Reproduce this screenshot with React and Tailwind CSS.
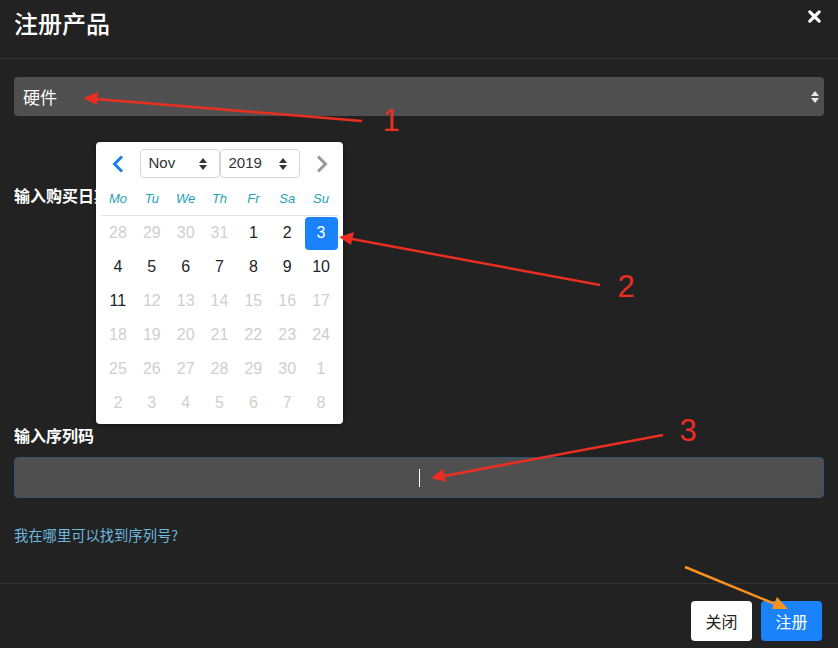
import React from "react";

const cjk = { fontFamily: '"Noto Sans CJK SC", "Noto Sans", sans-serif' };
const latin = { fontFamily: '"Liberation Sans", Arial, sans-serif' };

const weekDays = ["Mo", "Tu", "We", "Th", "Fr", "Sa", "Su"];

// [label, kind] kind: "off" = greyed, "on" = current month, "sel" = selected
const days = [
  ["28", "off"], ["29", "off"], ["30", "off"], ["31", "off"], ["1", "on"], ["2", "on"], ["3", "sel"],
  ["4", "on"], ["5", "on"], ["6", "on"], ["7", "on"], ["8", "on"], ["9", "on"], ["10", "on"],
  ["11", "on"], ["12", "off"], ["13", "off"], ["14", "off"], ["15", "off"], ["16", "off"], ["17", "off"],
  ["18", "off"], ["19", "off"], ["20", "off"], ["21", "off"], ["22", "off"], ["23", "off"], ["24", "off"],
  ["25", "off"], ["26", "off"], ["27", "off"], ["28", "off"], ["29", "off"], ["30", "off"], ["1", "off"],
  ["2", "off"], ["3", "off"], ["4", "off"], ["5", "off"], ["6", "off"], ["7", "off"], ["8", "off"],
];

const SortIcon = ({ color = "#333" }) => (
  <svg width="8" height="12" viewBox="0 0 8 12">
    <path d="M4 0 L8 5 L0 5 Z" fill={color} />
    <path d="M0 7 L8 7 L4 12 Z" fill={color} />
  </svg>
);

const MiniSelect = ({ value }) => (
  <div className="w-[80px] h-[29px] border border-[#d6d6d6] rounded-[4px] flex items-center justify-between pl-[8px] pr-[12px] text-[15px] text-[#333]">
    <span>{value}</span>
    <SortIcon />
  </div>
);

const Calendar = () => (
  <div
    className="absolute left-[96px] top-[142px] w-[247px] h-[282px] bg-white rounded-[4px] px-[5px] pt-[7px] shadow-[0_1px_4px_rgba(0,0,0,0.4)]"
    style={latin}
  >
    <div className="flex items-center justify-between h-[29px]">
      <div className="w-[33px] flex justify-center">
        <svg width="12" height="18" viewBox="0 0 12 18">
          <path d="M10 1.5 L2.5 9 L10 16.5" stroke="#1a7ff0" strokeWidth="3" fill="none" />
        </svg>
      </div>
      <div className="flex">
        <MiniSelect value="Nov" />
        <MiniSelect value="2019" />
      </div>
      <div className="w-[33px] flex justify-center">
        <svg width="12" height="18" viewBox="0 0 12 18">
          <path d="M2 1.5 L9.5 9 L2 16.5" stroke="#999" strokeWidth="3" fill="none" />
        </svg>
      </div>
    </div>
    <div className="grid grid-cols-7 h-[36px] items-center border-b border-[#e2e2e2] mt-[2px] pt-[3px]">
      {weekDays.map((d) => (
        <div key={d} className="text-center italic text-[13px] text-[#1fa0b7]">
          {d}
        </div>
      ))}
    </div>
    <div className="grid grid-cols-7">
      {days.map(([n, kind], i) => (
        <div key={i} className="h-[34px] flex items-center justify-center">
          <div
            className={
              kind === "sel"
                ? "w-[33px] h-[33px] rounded-[4px] bg-[#1a82fb] text-white flex items-center justify-center text-[16px]"
                : kind === "on"
                ? "text-[16px] text-[#212529]"
                : "text-[16px] text-[#cfcfcf]"
            }
          >
            {n}
          </div>
        </div>
      ))}
    </div>
  </div>
);

const Annotations = () => (
  <svg
    className="absolute left-0 top-0 pointer-events-none"
    width="838"
    height="648"
    viewBox="0 0 838 648"
  >
    <g stroke="#ea2e22" strokeWidth="2.5" fill="#ea2e22">
      <line x1="362" y1="121" x2="96" y2="99" />
      <path d="M83 98 L98 92 L97 105 Z" stroke="none" />
      <line x1="600" y1="285" x2="352" y2="239" />
      <path d="M339 237 L354 232 L351 245 Z" stroke="none" />
      <line x1="663" y1="435" x2="444" y2="476" />
      <path d="M431 478 L443 469 L446 482 Z" stroke="none" />
    </g>
    <g stroke="#f7931e" strokeWidth="2.5" fill="#f7931e">
      <line x1="685" y1="567" x2="775" y2="604" />
      <path d="M788 609 L772 609 L777 597 Z" stroke="none" />
    </g>
    <g fill="#ea2e22" style={latin} fontSize="31">
      <text x="391" y="131" textAnchor="middle">1</text>
      <text x="626" y="297" textAnchor="middle">2</text>
      <text x="688" y="441" textAnchor="middle">3</text>
    </g>
  </svg>
);

export default function App() {
  return (
    <div className="relative w-[838px] h-[648px] bg-[#222222] overflow-hidden" style={cjk}>
      <div className="h-[59px] border-b border-[#333333] px-[14px] pt-[7px] flex items-start justify-between">
        <h1 className="text-[24px] leading-[32px] font-medium text-white">注册产品</h1>
        <svg className="mt-[3px] mr-[3px]" width="13" height="13" viewBox="0 0 14 14">
          <path d="M2 2 L12 12 M12 2 L2 12" stroke="white" strokeWidth="3.4" strokeLinecap="round" />
        </svg>
      </div>

      <div className="px-[14px] pt-[18px] pb-[38px] border-b border-[#333333]">
        <div className="h-[39px] rounded-[4px] bg-[#4f4f4f] flex items-center justify-between pl-[9px] pr-[5px] text-[17px] text-white">
          <span>硬件</span>
          <SortIcon color="#e8e8e8" />
        </div>

        <div className="mt-[67px] h-[24px] text-[16px] leading-[24px] font-bold text-white">输入购买日期</div>

        <div className="h-[216px]" />

        <div className="h-[24px] text-[16px] leading-[24px] font-bold text-white">输入序列码</div>

        <div className="mt-[10px] h-[41px] rounded-[4px] bg-[#4f4f4f] border border-[#2f5677] flex items-center justify-center">
          <span className="w-[1px] h-[18px] bg-white" />
        </div>

        <div className="mt-[27px] text-[14.3px] leading-[20px] text-[#6cb8df]">我在哪里可以找到序列号?</div>
      </div>

      <div className="flex justify-end gap-[9px] px-[16px] pt-[17px]">
        <button className="w-[61px] h-[40px] rounded-[4px] bg-white text-[16px] text-[#222]">关闭</button>
        <button className="w-[61px] h-[40px] rounded-[4px] bg-[#1a82fb] text-[16px] text-white">注册</button>
      </div>

      <Calendar />
      <Annotations />
    </div>
  );
}
